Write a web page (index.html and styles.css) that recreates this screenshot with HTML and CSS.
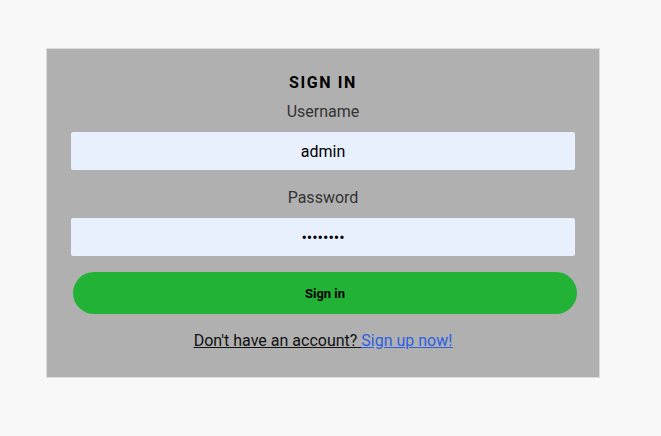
FILE: index.html
```html
<!DOCTYPE html>
<html>
<head>
<meta charset="utf-8">
<link rel="stylesheet" href="styles.css">
</head>
<body>
<div class="card">
  <h1 class="title">SIGN IN</h1>
  <label class="label">Username</label>
  <input class="field" type="text" value="admin">
  <label class="label label-pw">Password</label>
  <input class="field" type="password" value="password">
  <button class="btn">Sign in</button>
  <p class="foot"><span class="foot-text">Don't have an account?</span> <a class="foot-link" href="#">Sign up now!</a></p>
</div>
</body>
</html>
```
FILE: styles.css
```css
html, body {
  margin: 0;
  padding: 0;
  background: #f8f8f8;
  font-family: Roboto, "Liberation Sans", sans-serif;
}
body {
  padding: 48px 0 0 46px;
}
.card {
  width: 504px;
  background: #b0b0b0;
  border: 1px solid #dcdcdc;
  padding: 25px 24px 26px 24px;
  display: flex;
  flex-direction: column;
  align-items: stretch;
  text-align: center;
}
.title {
  margin: 0;
  font-size: 16px;
  line-height: 18px;
  font-weight: 700;
  letter-spacing: 1.6px;
  color: #000;
}
.label {
  display: block;
  margin-top: 10px;
  font-size: 16px;
  line-height: 20px;
  color: #333;
}
.label-pw {
  margin-top: 18px;
}
.field {
  box-sizing: border-box;
  margin-top: 10px;
  width: 504px;
  height: 38px;
  border: none;
  border-radius: 2px;
  background: #e8f0fe;
  text-align: center;
  font-family: Roboto, "Liberation Sans", sans-serif;
  font-size: 16px;
  color: #000;
  outline: none;
  padding: 0;
}
.btn {
  margin: 16px 0 0 2px;
  width: 504px;
  height: 42px;
  border: none;
  border-radius: 21px;
  background: #21b236;
  font-family: Roboto, "Liberation Sans", sans-serif;
  font-size: 13px;
  font-weight: 700;
  color: #000;
}
.foot {
  margin: 17px 0 0 0;
  font-size: 16px;
  line-height: 20px;
  color: #111;
  text-decoration: underline;
}
.foot-link {
  color: #2e5fe0;
}
```
